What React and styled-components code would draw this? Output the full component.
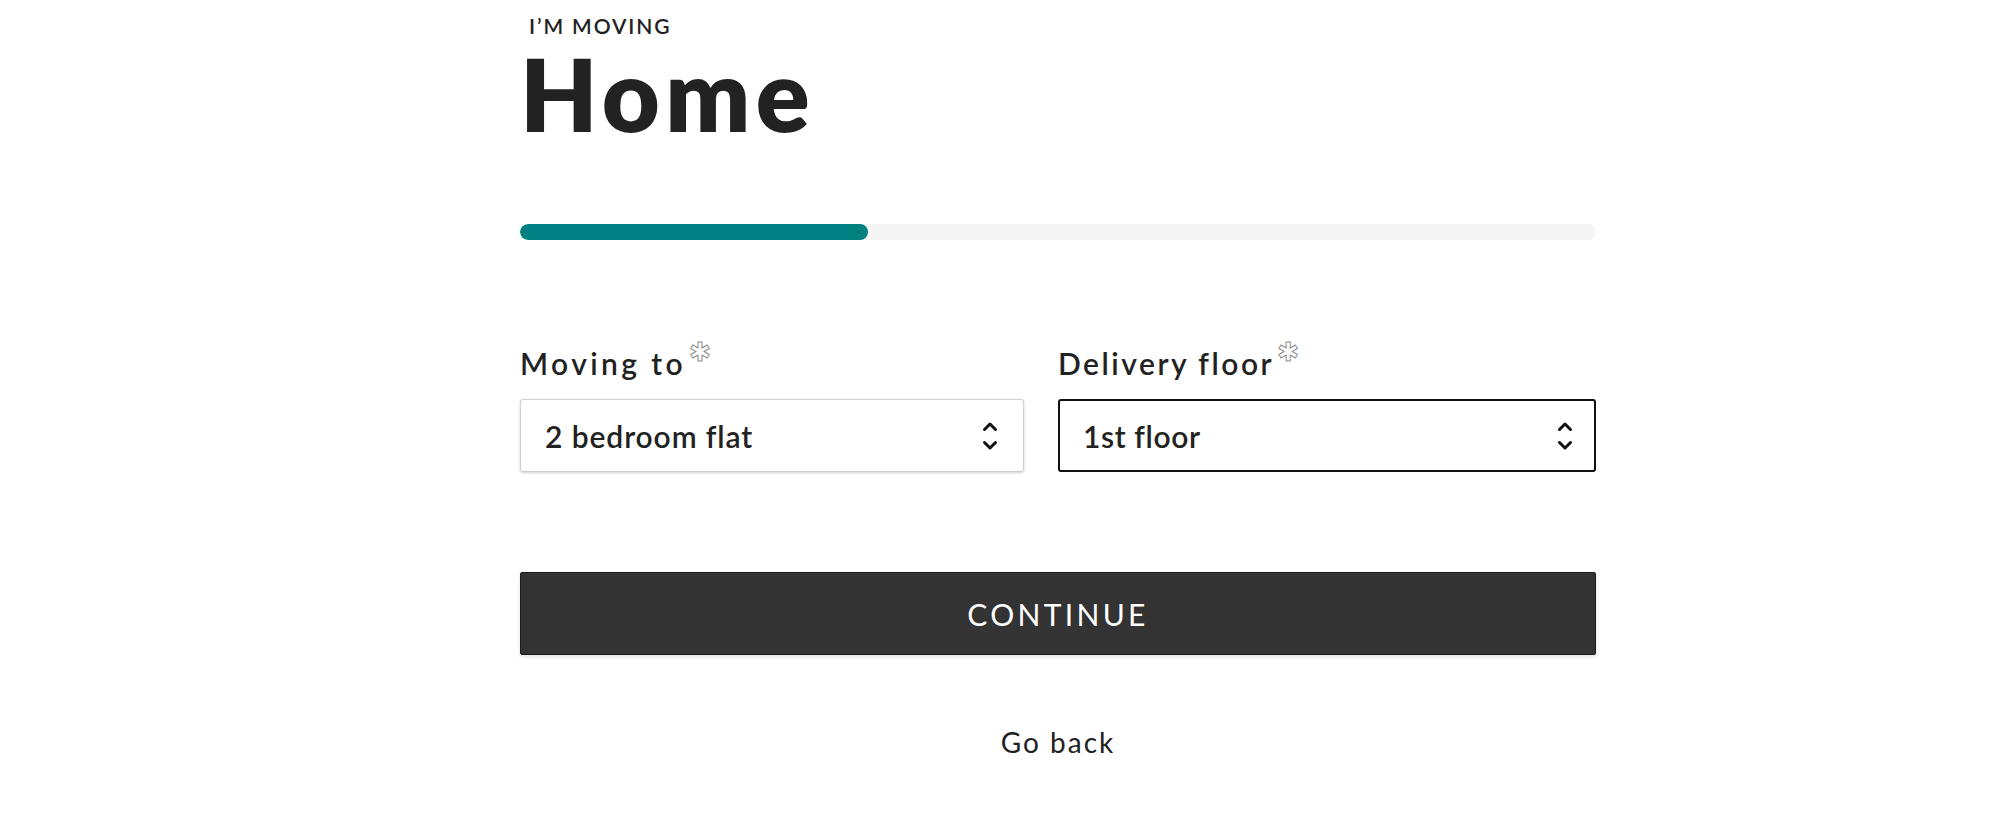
import React from "react";
import styled, { createGlobalStyle } from "styled-components";

const GlobalStyle = createGlobalStyle`
  html, body { margin: 0; padding: 0; background: #ffffff; }
  body { font-family: Lato, "Open Sans", sans-serif; color: #222222; }
  * { box-sizing: border-box; }
`;

const Page = styled.main`
  padding-left: 520px;
`;

const Column = styled.div`
  width: 1076px;
  display: flex;
  flex-direction: column;
`;

const Eyebrow = styled.p`
  margin: 0;
  padding: 15px 0 0 9px;
  font-size: 21px;
  line-height: 21px;
  font-weight: 600;
  letter-spacing: 1.9px;
  text-transform: uppercase;
  color: #222;
`;

const Title = styled.h1`
  margin: 7px 0 0;
  font-size: 100px;
  line-height: 100px;
  font-weight: 800;
  color: #222;
  letter-spacing: 5.5px;
`;

const Track = styled.div`
  margin-top: 81px;
  height: 16px;
  border-radius: 8px;
  background: #f5f5f5;
  overflow: hidden;
`;

const Fill = styled.div`
  height: 100%;
  border-radius: 8px;
  background: #008080;
`;

const Fields = styled.div`
  margin-top: 108px;
  display: grid;
  grid-template-columns: 504px 538px;
  column-gap: 34px;
`;

const Field = styled.label`
  display: flex;
  flex-direction: column;
  gap: 21px;
`;

const LabelText = styled.span`
  font-size: 30px;
  line-height: 30px;
  font-weight: 600;
  letter-spacing: ${(p) => p.$spacing}px;
  color: #222;
`;

const Required = styled.span`
  display: inline-block;
  margin-left: 3px;
  font-family: "DejaVu Sans", sans-serif;
  font-size: 26px;
  line-height: 1;
  vertical-align: top;
  margin-top: -9px;
  letter-spacing: 0;
  color: #ffffff;
  -webkit-text-stroke: 1px #8f8f8f;
`;

const SelectWrap = styled.div`
  position: relative;
  height: 73px;
`;

const Select = styled.select`
  appearance: none;
  -webkit-appearance: none;
  width: 100%;
  height: 100%;
  margin: 0;
  padding: 0 60px 0 ${(p) => (p.$focused ? "23px" : "24px")};
  font-family: Lato, "Open Sans", sans-serif;
  font-size: 30px;
  font-weight: 600;
  letter-spacing: ${(p) => p.$spacing}px;
  color: #222;
  background: #fff;
  border-radius: 3px;
  border: ${(p) => (p.$focused ? "2px solid #111" : "1px solid #cfcfcf")};
  box-shadow: ${(p) => (p.$focused ? "none" : "0 1px 3px rgba(0,0,0,0.18)")};
  outline: none;
`;

const Chevrons = styled.svg`
  position: absolute;
  right: ${(p) => p.$right}px;
  top: 50%;
  transform: translateY(-50%);
  pointer-events: none;
`;

const ContinueButton = styled.button`
  margin-top: 100px;
  height: 83px;
  width: 100%;
  background: #333333;
  border: 1px solid #1c1c1c;
  border-radius: 2px;
  box-shadow: 0 2px 4px rgba(0, 0, 0, 0.12);
  color: #ffffff;
  font-family: Lato, "Open Sans", sans-serif;
  font-size: 30px;
  font-weight: 400;
  letter-spacing: 3.3px;
  text-transform: uppercase;
  cursor: pointer;
`;

const BackLink = styled.a`
  margin-top: 73px;
  align-self: center;
  font-size: 28px;
  line-height: 28px;
  font-weight: 400;
  letter-spacing: 2px;
  color: #222;
  text-decoration: none;
`;

function ChevronIcon({ right }) {
  return (
    <Chevrons $right={right} width="16" height="32" viewBox="0 0 16 32" aria-hidden="true">
      <path d="M2.5 9.5 L8 4 L13.5 9.5" fill="none" stroke="#111" strokeWidth="3" strokeLinecap="round" strokeLinejoin="round" />
      <path d="M2.5 22.5 L8 28 L13.5 22.5" fill="none" stroke="#111" strokeWidth="3" strokeLinecap="round" strokeLinejoin="round" />
    </Chevrons>
  );
}

const progress = 348 / 1076;

export default function App() {
  return (
    <>
      <GlobalStyle />
      <Page>
        <Column>
          <Eyebrow>I’m moving</Eyebrow>
          <Title>Home</Title>
          <Track>
            <Fill style={{ width: `${progress * 100}%` }} />
          </Track>
          <Fields>
            <Field>
              <LabelText $spacing={3.4}>
                Moving to<Required>✱</Required>
              </LabelText>
              <SelectWrap>
                <Select $spacing={0.9} defaultValue="2 bedroom flat">
                  <option>Studio flat</option>
                  <option>1 bedroom flat</option>
                  <option>2 bedroom flat</option>
                  <option>3 bedroom flat</option>
                </Select>
                <ChevronIcon right={26} />
              </SelectWrap>
            </Field>
            <Field>
              <LabelText $spacing={2.5}>
                Delivery floor<Required>✱</Required>
              </LabelText>
              <SelectWrap>
                <Select $focused $spacing={0.6} defaultValue="1st floor">
                  <option>Ground floor</option>
                  <option>1st floor</option>
                  <option>2nd floor</option>
                  <option>3rd floor</option>
                </Select>
                <ChevronIcon right={23} />
              </SelectWrap>
            </Field>
          </Fields>
          <ContinueButton>Continue</ContinueButton>
          <BackLink href="#">Go back</BackLink>
        </Column>
      </Page>
    </>
  );
}
